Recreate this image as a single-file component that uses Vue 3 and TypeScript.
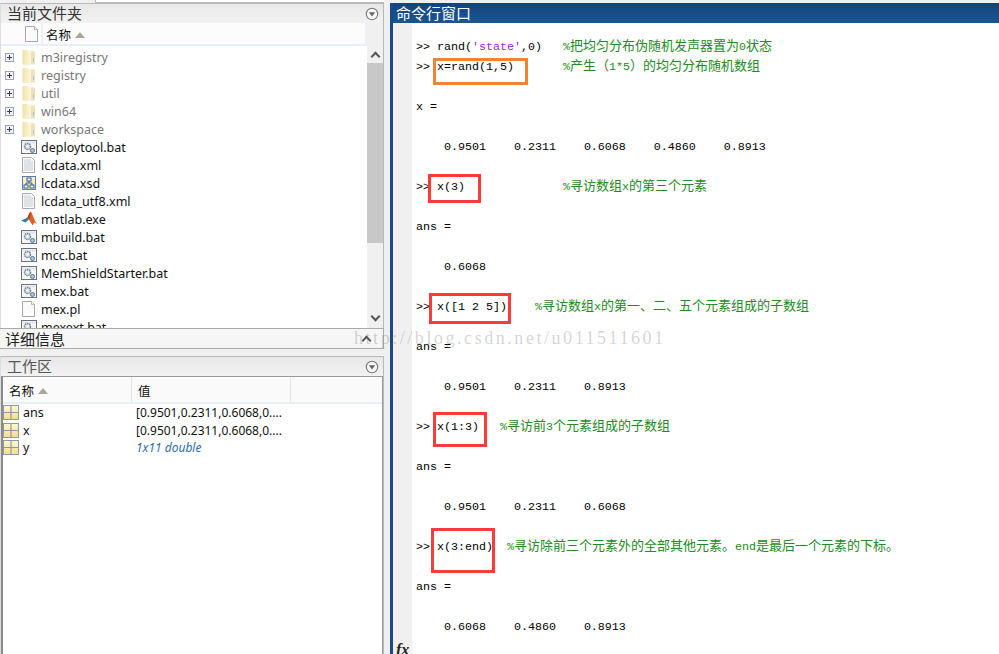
<script setup lang="ts">
type Icon = 'folder' | 'bat' | 'doc' | 'xsd' | 'matlab' | 'plain'
interface FileRow { name: string; icon: Icon; tree?: boolean }
const files: FileRow[] = [
  { name: 'm3iregistry', icon: 'folder', tree: true },
  { name: 'registry', icon: 'folder', tree: true },
  { name: 'util', icon: 'folder', tree: true },
  { name: 'win64', icon: 'folder', tree: true },
  { name: 'workspace', icon: 'folder', tree: true },
  { name: 'deploytool.bat', icon: 'bat' },
  { name: 'lcdata.xml', icon: 'doc' },
  { name: 'lcdata.xsd', icon: 'xsd' },
  { name: 'lcdata_utf8.xml', icon: 'doc' },
  { name: 'matlab.exe', icon: 'matlab' },
  { name: 'mbuild.bat', icon: 'bat' },
  { name: 'mcc.bat', icon: 'bat' },
  { name: 'MemShieldStarter.bat', icon: 'bat' },
  { name: 'mex.bat', icon: 'bat' },
  { name: 'mex.pl', icon: 'plain' },
  { name: 'mexext.bat', icon: 'bat' },
]
const vars = [
  { name: 'ans', value: '[0.9501,0.2311,0.6068,0....', meta: false },
  { name: 'x', value: '[0.9501,0.2311,0.6068,0....', meta: false },
  { name: 'y', value: '1x11 double', meta: true },
]
interface Line { code?: string; str?: string; tail?: string; comment?: string }
const lines: Line[] = [
  { code: '>> rand(', str: "'state'", tail: ',0)   ', comment: '%把均匀分布伪随机发声器置为0状态' },
  { code: '>> x=rand(1,5)       ', comment: '%产生（1*5）的均匀分布随机数组' },
  {},
  { code: 'x =' },
  {},
  { code: '    0.9501    0.2311    0.6068    0.4860    0.8913' },
  {},
  { code: '>> x(3)              ', comment: '%寻访数组x的第三个元素' },
  {},
  { code: 'ans =' },
  {},
  { code: '    0.6068' },
  {},
  { code: '>> x([1 2 5])    ', comment: '%寻访数组x的第一、二、五个元素组成的子数组' },
  {},
  { code: 'ans =' },
  {},
  { code: '    0.9501    0.2311    0.8913' },
  {},
  { code: '>> x(1:3)   ', comment: '%寻访前3个元素组成的子数组' },
  {},
  { code: 'ans =' },
  {},
  { code: '    0.9501    0.2311    0.6068' },
  {},
  { code: '>> x(3:end)  ', comment: '%寻访除前三个元素外的全部其他元素。end是最后一个元素的下标。' },
  {},
  { code: 'ans =' },
  {},
  { code: '    0.6068    0.4860    0.8913' },
]
function segments(text: string): { t: string; cjk: boolean }[] {
  const out: { t: string; cjk: boolean }[] = []
  for (const m of text.matchAll(/[\x00-\x7f]+|[^\x00-\x7f]+/g)) {
    out.push({ t: m[0], cjk: m[0].charCodeAt(0) > 127 })
  }
  return out
}
const marks = [
  { x: 21, y: 35, w: 95, h: 27, orange: true },
  { x: 16, y: 151, w: 53, h: 29, orange: false },
  { x: 17, y: 270, w: 82, h: 31, orange: false },
  { x: 21, y: 389, w: 54, h: 35, orange: false },
  { x: 19, y: 505, w: 64, h: 45, orange: false },
]
</script>

<template>
  <div class="desk">
    <svg class="defs" aria-hidden="true">
      <defs>
        <linearGradient id="fg" x1="0" y1="0" x2="1" y2="0">
          <stop offset="0" stop-color="#f3e5b0" />
          <stop offset="0.6" stop-color="#fdf6d8" />
          <stop offset="1" stop-color="#ecdfb0" />
        </linearGradient>
        <linearGradient id="gy" x1="0" y1="0" x2="0" y2="1">
          <stop offset="0" stop-color="#fff8d8" />
          <stop offset="1" stop-color="#f6dc86" />
        </linearGradient>
        <symbol id="i-folder" viewBox="0 0 16 16">
          <path d="M1.500 1h4l1 1h5v13.500h-10z" fill="#efdfa6" />
          <path d="M2.500 1.500h8l3.500 1.500v12.500h-11.500z" fill="url(#fg)" />
          <path d="M11 3v12" stroke="#e2d5a4" fill="none" />
          <path d="M12.500 9v4" stroke="#a9c6d8" fill="none" />
        </symbol>
        <symbol id="i-bat" viewBox="0 0 16 16">
          <rect x="0.500" y="1.500" width="15" height="13" fill="#f4f6f8" stroke="#6d7378" />
          <rect x="1.500" y="2.500" width="13" height="2" fill="#dfe6ec" />
          <circle cx="6.500" cy="7.500" r="3" fill="#dde3e8" stroke="#6f7f8c" stroke-width="1.400" stroke-dasharray="1.500 0.700" />
          <circle cx="6.500" cy="7.500" r="1" fill="#fff" />
          <circle cx="11.500" cy="11.500" r="2" fill="#a8c4dc" stroke="#4f7aa3" />
        </symbol>
        <symbol id="i-doc" viewBox="0 0 16 16">
          <path d="M1.500 0.500h9l3 3v12h-12z" fill="#fbfbfb" stroke="#a9a9a9" />
          <path d="M3 3h7M3 5h9M3 7h9M3 9h9M3 11h9M3 13h9" stroke="#c3ccd4" fill="none" />
        </symbol>
        <symbol id="i-plain" viewBox="0 0 16 16">
          <path d="M1.500 0.500h9l3 3v12h-12z" fill="#fbfbfb" stroke="#a9a9a9" />
          <path d="M10.500 0.500v3h3" fill="#eee" stroke="#b5b5b5" />
        </symbol>
        <symbol id="i-xsd" viewBox="0 0 16 16">
          <rect x="1.500" y="1.500" width="13" height="13" fill="#fbf0b8" stroke="#5a7fb8" />
          <rect x="6" y="3" width="4" height="3" fill="#fff" stroke="#1f4a9a" stroke-width="0.900" />
          <rect x="3" y="10" width="4" height="3" fill="#fff" stroke="#1f4a9a" stroke-width="0.900" />
          <rect x="9" y="10" width="4" height="3" fill="#fff" stroke="#1f4a9a" stroke-width="0.900" />
          <path d="M8 6v2M5 10v-2h6v2" stroke="#1f4a9a" stroke-width="0.900" fill="none" />
        </symbol>
        <symbol id="i-matlab" viewBox="0 0 16 16">
          <path d="M0 9.500l4.500-1.800 2-1.700 1.200 2.500-3.200 3z" fill="#2f78b5" />
          <path d="M6.500 6c1-1 1.800-5 3.200-5 1.600 0 3 8 6.300 12l-2.800-1.500-1.500 3c-1.300-1.800-2.600-4.500-4-6.300z" fill="#e0601f" />
          <path d="M9.700 1c-1.400 0-1.700 3.500-2.800 5.700l1.200 2c.9-2.500 1.500-5.700 1.600-7.700z" fill="#a93a1e" />
        </symbol>
        <symbol id="i-grid" viewBox="0 0 16 15">
          <rect x="0.500" y="0.500" width="15" height="14" fill="url(#gy)" stroke="#8d99a8" />
          <path d="M8 0.500v14M0.500 7.500h15" stroke="#8d99a8" stroke-width="1.200" fill="none" />
        </symbol>
        <symbol id="i-menu" viewBox="0 0 14 14">
          <circle cx="7" cy="7" r="5.700" fill="#f6f6f6" stroke="#777" stroke-width="1.100" />
          <path d="M3.800 5.300h6.400l-3.200 4.200z" fill="#666" />
        </symbol>
      </defs>
    </svg>

    <aside class="left">
      <div class="topstrip"><span class="tab-edge"></span></div>
      <section class="pane folders">
        <header class="bar">
          <span class="bar-title">当前文件夹</span>
          <svg class="menu"><use href="#i-menu" /></svg>
        </header>
        <div class="list-head">
          <span class="head-icon">
            <svg class="ico"><use href="#i-plain" /></svg>
          </span>
          <span class="head-name">名称<i class="sort"></i></span>
          <span class="head-spare"></span>
        </div>
        <div class="list-wrap">
          <ul class="list">
            <li v-for="f in files" :key="f.name" class="row" :class="{ dim: f.tree }">
              <span class="tree">
                <span v-if="f.tree" class="plus"></span>
              </span>
              <svg class="ico"><use :href="'#i-' + f.icon" /></svg>
              <span class="fname">{{ f.name }}</span>
            </li>
          </ul>
          <div class="scroll">
            <span class="chev up"></span>
            <span class="thumb"></span>
            <span class="chev down"></span>
          </div>
        </div>
      </section>

      <section class="details">
        <span class="bar-title">详细信息</span>
        <span class="chev up dark"></span>
      </section>

      <section class="pane workspace">
        <header class="bar wbar">
          <span class="bar-title dimmed">工作区</span>
          <svg class="menu"><use href="#i-menu" /></svg>
        </header>
        <div class="wtable">
          <div class="wh">
            <span class="wc c1">名称<i class="sort"></i></span>
            <span class="wc c2">值</span>
            <span class="wc c3"></span>
          </div>
          <div v-for="v in vars" :key="v.name" class="wr">
            <svg class="grid"><use href="#i-grid" /></svg>
            <span class="vname">{{ v.name }}</span>
            <span class="vval" :class="{ meta: v.meta }">{{ v.value }}</span>
          </div>
        </div>
      </section>
    </aside>

    <main class="cmd">
      <header class="cmd-bar">命令行窗口</header>
      <div class="cmd-body">
        <div class="gutter"><span class="fx">fx</span></div>
        <div class="console">
          <div v-for="(l, i) in lines" :key="i" class="ln">
            <span v-if="l.code">{{ l.code }}</span><span v-if="l.str" class="str">{{ l.str }}</span><span v-if="l.tail">{{ l.tail }}</span><span v-if="l.comment" class="cmt"><span v-for="(s, j) in segments(l.comment)" :key="j" :class="{ cjk: s.cjk }">{{ s.t }}</span></span>
          </div>
          <span
            v-for="(m, i) in marks"
            :key="i"
            class="mark"
            :class="{ orange: m.orange }"
            :style="{ left: m.x + 'px', top: m.y + 'px', width: m.w + 'px', height: m.h + 'px' }"
          ></span>
        </div>
      </div>
      <span class="wm">http://blog.csdn.net/u011511601</span>
    </main>
  </div>
</template>

<style>
html, body { margin: 0; background: #f0f0f0; }
</style>

<style scoped>
.desk {
  position: relative;
  display: flex;
  width: 999px;
  height: 654px;
  overflow: hidden;
  background: #f0f0f0;
  font-family: "Noto Sans", "Noto Sans CJK SC", sans-serif;
}
.defs { position: absolute; width: 0; height: 0; }
.left {
  width: 384px;
  flex: none;
  display: flex;
  flex-direction: column;
  box-sizing: border-box;
}
.topstrip { height: 3px; flex: none; display: flex; padding-left: 95px; background: #f0f0f0; }
.tab-edge { flex: 1; background: #fff; border-left: 1px solid #bbb; border-bottom: 1px solid #bbb; }
.pane {
  display: flex;
  flex-direction: column;
  border: 1px solid #b8b8b8;
  border-bottom: 0;
  box-sizing: border-box;
}
.folders { height: 326px; border-left-color: #ddd; background: #fff; }
.bar {
  height: 19px;
  flex: none;
  display: flex;
  align-items: center;
  justify-content: space-between;
  padding: 0 4px 0 6px;
  background: linear-gradient(#e8e8e8, #f2f2f2);
}
.bar-title {
  font-size: 15px;
  line-height: 17px;
  color: #333;
  font-family: "Noto Sans CJK SC", sans-serif;
  padding-bottom: 2px;
}
.dimmed { color: #555; }
.menu { width: 14px; height: 14px; }
.list-head {
  display: flex;
  height: 23px;
  flex: none;
  background: #f0f0f0;
}
.head-icon {
  width: 40px;
  display: flex;
  justify-content: flex-end;
  align-items: center;
  padding-right: 1px;
  box-sizing: border-box;
  background: #fcfcfc;
  border-bottom: 2px solid #e9eff8;
}
.head-name {
  width: 324px;
  padding-left: 3px;
  margin-left: 1px;
  box-sizing: border-box;
  background: #fcfcfc;
  border-left: 1px solid #e9eff8;
  border-right: 1px solid #e9eff8;
  border-bottom: 2px solid #e9eff8;
  font: 12.500px/23px "Noto Sans CJK SC", sans-serif;
  color: #111;
}
.head-spare { flex: 1; }
.sort {
  display: inline-block;
  margin-left: 4px;
  vertical-align: 2px;
  border-left: 5px solid transparent;
  border-right: 5px solid transparent;
  border-bottom: 6px solid #a9a995;
}
.list-wrap { flex: 1; display: flex; min-height: 0; overflow: hidden; }
.list {
  flex: 1;
  margin: 2px 0 0;
  padding: 0;
  list-style: none;
  overflow: hidden;
  background: #fff;
}
.row {
  display: flex;
  align-items: center;
  height: 18px;
  font-size: 12.500px;
  color: #111;
}
.row.dim { color: #777; }
.tree { width: 20px; flex: none; padding-left: 4px; box-sizing: border-box; display: flex; }
.plus {
  position: relative;
  width: 9px;
  height: 9px;
  box-sizing: border-box;
  border: 1px solid #9aa4b4;
  background: #f4f4f4;
}
.plus::before { content: ""; position: absolute; left: 1px; top: 3px; width: 5px; height: 1px; background: #2a3c78; }
.plus::after { content: ""; position: absolute; left: 3px; top: 1px; width: 1px; height: 5px; background: #2a3c78; }
.ico { width: 16px; height: 16px; flex: none; }
.fname { margin-left: 4px; white-space: nowrap; }
.scroll {
  width: 16px;
  flex: none;
  display: flex;
  flex-direction: column;
  align-items: center;
  background: #f0f0f0;
}
.thumb { width: 16px; height: 180px; background: #c8c8c8; flex: none; }
.chev {
  display: block;
  width: 7px;
  height: 7px;
  box-sizing: border-box;
  border-left: 2px solid #555;
  border-top: 2px solid #555;
  flex: none;
}
.chev.up { transform: rotate(45deg); margin: 7px 0 3px; }
.chev.down { transform: rotate(225deg); margin: auto 0 9px; }
.details {
  height: 21px;
  flex: none;
  display: flex;
  align-items: center;
  justify-content: space-between;
  padding: 0 11px 0 5px;
  border: 1px solid #aaa;
  border-width: 1px 1px 1px 0;
  box-sizing: border-box;
  background: #f6f6f6;
  margin-top: -1px;
}
.details .bar-title { color: #222; padding-bottom: 0; }
.details .chev.up { margin: 4px 2px 0 0; }
.workspace {
  flex: 1;
  margin-top: 7px;
  min-height: 0;
  border-left-color: #ddd;
}
.wbar { height: 19px; padding-left: 6px; }
.wtable {
  flex: 1;
  background: #fff;
  border: 1px solid #9a9a9a;
  border-left: 2px solid #8a8a8a;
  border-bottom: 0;
}
.wh { display: flex; height: 25px; background: #fafafa; border-bottom: 2px solid #e8eef6; }
.wc {
  display: flex;
  align-items: center;
  padding-top: 2px;
  font: 12.500px/24px "Noto Sans CJK SC", sans-serif;
  color: #111;
  box-sizing: border-box;
  border-right: 1px solid #e3e3e3;
}
.c1 { width: 129px; padding-left: 6px; }
.c2 { width: 159px; padding-left: 6px; }
.c3 { flex: 1; border-right: 0; }
.wr {
  display: flex;
  align-items: center;
  height: 17.500px;
  font-size: 12.500px;
  color: #111;
}
.grid { width: 16px; height: 15px; flex: none; }
.vname { width: 113px; margin-left: 4px; }
.vval { white-space: nowrap; font-size: 12px; }
.meta { color: #2c6fa6; font-style: italic; }
.cmd {
  position: relative;
  flex: 1;
  margin-left: 6px;
  margin-top: 3px;
  display: flex;
  flex-direction: column;
  border-left: 3px solid #174a87;
  min-width: 0;
}
.cmd-bar {
  height: 20px;
  flex: none;
  padding-left: 3px;
  font: 15px/20px "Noto Sans CJK SC", sans-serif;
  color: #fff;
  background: linear-gradient(#12437f, #1d568f);
}
.cmd-body { flex: 1; display: flex; min-height: 0; background: #fff; }
.gutter {
  position: relative;
  width: 19px;
  flex: none;
  background: #f0f0f0;
}
.fx {
  position: absolute;
  left: 3px;
  bottom: -6px;
  font: italic bold 16px/20px "Liberation Serif", serif;
  color: #222;
}
.console {
  position: relative;
  flex: 1;
  padding: 14px 0 0 4px;
  font: 11.670px/20px "Liberation Mono", monospace;
  color: #000;
  white-space: pre;
  overflow: hidden;
}
.ln { height: 20px; }
.str { color: #a020f0; }
.cmt { color: #228b22; }
.cjk { font: 13px/0 "Noto Sans CJK SC", sans-serif; }
.mark {
  position: absolute;
  box-sizing: border-box;
  border: 3px solid #f93b3b;
}
.mark.orange { border-color: #f58233; }
.wm {
  position: absolute;
  left: -39px;
  top: 325px;
  font: 18px/20px "Liberation Serif", serif;
  letter-spacing: 2.550px;
  color: rgba(120, 120, 120, 0.32);
  white-space: nowrap;
  pointer-events: none;
}
</style>
